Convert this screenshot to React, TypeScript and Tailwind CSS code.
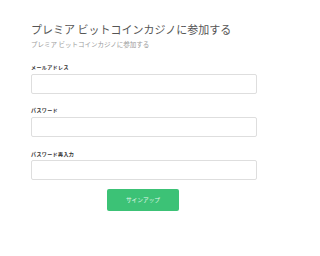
import React from "react";

export default function App() {
  const font = { fontFamily: '"Noto Sans CJK JP", "Noto Sans", sans-serif' };
  return (
    <div className="w-[300px] h-[256px] bg-white pl-[31px] pt-[23px]" style={font}>
      <div className="w-[226px]">
        <h1 className="text-[11px] leading-[13px] text-[#555555] font-normal whitespace-nowrap">
          プレミア ビットコインカジノに参加する
        </h1>
        <p className="mt-[4px] text-[6.5px] leading-[8px] text-[#9a9a9a] whitespace-nowrap">
          プレミア ビットコインカジノに参加する
        </p>
        <label className="block mt-[16px] text-[5px] leading-[6px] font-bold tracking-[0.4px] text-[#333333] whitespace-nowrap">
          メールアドレス
        </label>
        <div className="mt-[4px] h-[20px] rounded-[2px] border border-[#dedede] bg-white" />
        <label className="block mt-[13px] text-[5px] leading-[6px] font-bold tracking-[0.4px] text-[#333333] whitespace-nowrap">
          パスワード
        </label>
        <div className="mt-[4px] h-[20px] rounded-[2px] border border-[#dedede] bg-white" />
        <label className="block mt-[14px] text-[5px] leading-[6px] font-bold tracking-[0.4px] text-[#333333] whitespace-nowrap">
          パスワード再入力
        </label>
        <div className="mt-[3px] h-[20px] rounded-[2px] border border-[#dedede] bg-white" />
        <div className="mt-[9px] flex pl-[76px]">
          <button className="w-[72px] h-[22px] rounded-[2px] bg-[#3cc276] text-[5.7px] text-white/85 flex items-center justify-center">
            サインアップ
          </button>
        </div>
      </div>
    </div>
  );
}
